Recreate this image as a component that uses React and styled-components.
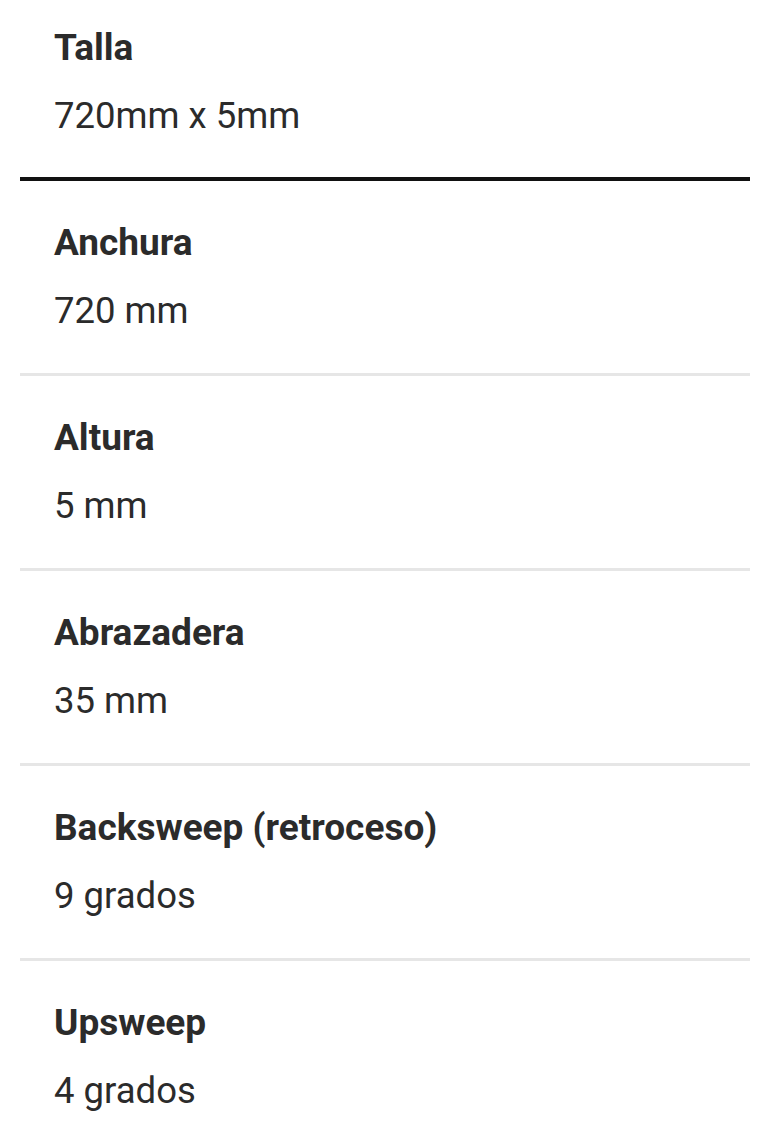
import React from 'react';
import styled, { createGlobalStyle } from 'styled-components';

const GlobalStyle = createGlobalStyle`
  body {
    margin: 0;
    background: #ffffff;
    font-family: Roboto, "Liberation Sans", sans-serif;
  }
`;

const SpecList = styled.div`
  display: flex;
  flex-direction: column;
  padding: 0 20px;
`;

const SpecRow = styled.div`
  display: flex;
  flex-direction: column;
  gap: 26px;
  padding: ${(p) => (p.$first ? '27px 34px 40px' : '41px 34px')};
  border-bottom: ${(p) => (p.$first ? '4px solid #111111' : '3px solid #e6e6e6')};

  &:last-child {
    border-bottom: none;
  }
`;

const SpecLabel = styled.div`
  font-size: 37px;
  line-height: 42px;
  font-weight: 700;
  color: #2b2b2b;
`;

const SpecValue = styled.div`
  font-size: 36.5px;
  line-height: 42px;
  font-weight: 400;
  color: #2b2b2b;
`;

const specs = [
  { label: 'Talla', value: '720mm x 5mm' },
  { label: 'Anchura', value: '720 mm' },
  { label: 'Altura', value: '5 mm' },
  { label: 'Abrazadera', value: '35 mm' },
  { label: 'Backsweep (retroceso)', value: '9 grados' },
  { label: 'Upsweep', value: '4 grados' },
];

function App() {
  return (
    <>
      <GlobalStyle />
      <SpecList>
        {specs.map((spec, idx) => (
          <SpecRow key={spec.label} $first={idx === 0}>
            <SpecLabel>{spec.label}</SpecLabel>
            <SpecValue>{spec.value}</SpecValue>
          </SpecRow>
        ))}
      </SpecList>
    </>
  );
}

export default App;
